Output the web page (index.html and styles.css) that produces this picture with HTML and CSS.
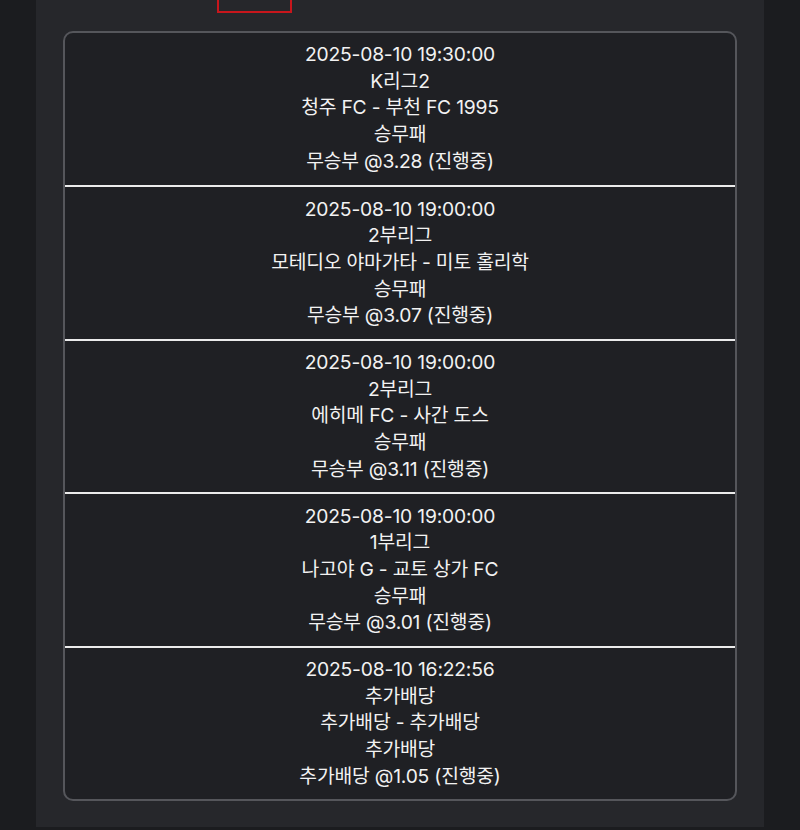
FILE: index.html
```html
<!DOCTYPE html>
<html lang="ko">
<head>
<meta charset="utf-8">
<link rel="stylesheet" href="styles.css">
</head>
<body>
<div class="panel">
  <div class="tab-mark"></div>
  <div class="card">
    <div class="row">
      <div>2025-08-10 19:30:00</div>
      <div>K리그2</div>
      <div>청주 FC - 부천 FC 1995</div>
      <div>승무패</div>
      <div>무승부 @3.28 (진행중)</div>
    </div>
    <div class="row">
      <div>2025-08-10 19:00:00</div>
      <div>2부리그</div>
      <div>모테디오 야마가타 - 미토 홀리학</div>
      <div>승무패</div>
      <div>무승부 @3.07 (진행중)</div>
    </div>
    <div class="row">
      <div>2025-08-10 19:00:00</div>
      <div>2부리그</div>
      <div>에히메 FC - 사간 도스</div>
      <div>승무패</div>
      <div>무승부 @3.11 (진행중)</div>
    </div>
    <div class="row">
      <div>2025-08-10 19:00:00</div>
      <div>1부리그</div>
      <div>나고야 G - 교토 상가 FC</div>
      <div>승무패</div>
      <div>무승부 @3.01 (진행중)</div>
    </div>
    <div class="row">
      <div>2025-08-10 16:22:56</div>
      <div>추가배당</div>
      <div>추가배당 - 추가배당</div>
      <div>추가배당</div>
      <div>추가배당 @1.05 (진행중)</div>
    </div>
  </div>
</div>
</body>
</html>
```

FILE: styles.css
```css
html, body {
  margin: 0;
  padding: 0;
  background: #1b1c1f;
}
body {
  font-family: Inter, "Noto Sans CJK KR", sans-serif;
  color: #f2f2f2;
}
.panel {
  margin: 0 36px;
  background: #26272b;
  padding-bottom: 26px;
  display: flex;
  flex-direction: column;
}
.tab-mark {
  margin-left: 181px;
  width: 71px;
  height: 11px;
  border: 2px solid #c8161c;
  border-top: none;
}
.card {
  margin: 18px 27px 0;
  border: 2px solid #55565b;
  border-radius: 10px;
  background: #1f2024;
  overflow: hidden;
}
.row {
  height: 152px;
  box-sizing: border-box;
  padding-top: 8px;
  text-align: center;
  font-size: 19.3px;
  line-height: 26.7px;
  letter-spacing: -0.2px;
}
.row + .row {
  border-top: 2px solid #ebebeb;
  height: 153.5px;
  padding-top: 8.5px;
}
```
